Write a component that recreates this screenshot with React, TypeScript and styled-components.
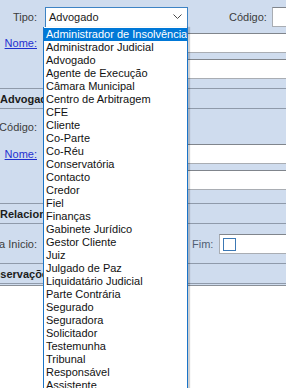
import React from "react";
import styled, { createGlobalStyle } from "styled-components";

const GlobalStyle = createGlobalStyle`
  html, body {
    margin: 0;
    padding: 0;
    background: #cfdcee;
    overflow: hidden;
  }
  body {
    font-family: "Liberation Sans", Arial, sans-serif;
    font-size: 11px;
    color: #3a3a3a;
  }
`;

const Page = styled.div`
  position: relative;
  width: 286px;
  height: 388px;
  overflow: hidden;
  background: #cfdcee;
`;

const Form = styled.div`
  display: flex;
  flex-direction: column;
`;

const Row = styled.div<{ $mt: number; $h?: number }>`
  display: flex;
  align-items: center;
  height: ${(p) => p.$h ?? 20}px;
  margin-top: ${(p) => p.$mt}px;
`;

const Label = styled.div<{ $w?: number }>`
  display: flex;
  justify-content: flex-end;
  width: ${(p) => p.$w ?? 37}px;
  flex-shrink: 0;
  white-space: nowrap;
  margin-right: 8px;
  color: #3c3c3c;
`;

const LinkLabel = styled.span`
  color: #1f2fd0;
  text-decoration: underline;
`;

const Input = styled.div<{ $w?: number }>`
  height: 20px;
  box-sizing: border-box;
  background: #fff;
  border: 1px solid #a9adb3;
  border-top-color: #80858c;
  ${(p) =>
    p.$w ? `width: ${p.$w}px; flex-shrink: 0;` : "flex: 1; margin-right: -4px;"}
`;

const Combo = styled.div`
  width: 143px;
  height: 21px;
  box-sizing: border-box;
  border: 1px solid #3d83c4;
  background: #fff;
  display: flex;
  align-items: center;
  padding: 0 5px 0 3px;
  color: #1a1a1a;
  flex-shrink: 0;
`;

const ComboText = styled.span`
  flex: 1;
`;

const SideLabel = styled.div`
  margin: 0 5px 0 41px;
  color: #3c3c3c;
  white-space: nowrap;
`;

const Header = styled.div<{ $mt: number }>`
  height: 21px;
  box-sizing: border-box;
  margin-top: ${(p) => p.$mt}px;
  border-top: 1px solid #8f9aaa;
  border-bottom: 1px solid #8f9aaa;
  display: flex;
  align-items: center;
  font-weight: bold;
  color: #1c1c1c;
  white-space: nowrap;
`;

const HeaderText = styled.span<{ $indent: number }>`
  margin-left: ${(p) => p.$indent}px;
`;

const FimLabel = styled.div`
  margin: 0 6px 0 47px;
  color: #4f5e74;
`;

const DateBox = styled.div`
  flex: 1;
  height: 20px;
  box-sizing: border-box;
  background: #fff;
  border: 1px solid #a9adb3;
  border-top-color: #80858c;
  display: flex;
  align-items: center;
  padding-left: 3px;
  margin-right: -4px;
`;

const Check = styled.div`
  width: 13px;
  height: 13px;
  box-sizing: border-box;
  border: 1px solid #3c78b4;
  background: #fff;
`;

const Memo = styled.div`
  margin-top: 1px;
  height: 120px;
  background: #fff;
  border-top: 1px solid #8a9098;
`;

const DropList = styled.ul`
  position: absolute;
  left: 43px;
  top: 27px;
  width: 145px;
  margin: 0;
  padding: 1px 0 0;
  list-style: none;
  box-sizing: border-box;
  background: #fff;
  border: 1px solid #1a74c8;
  border-top: none;
  box-shadow: 2px 0 1px rgba(0, 0, 0, 0.18);
  color: #111;
`;

const Option = styled.li<{ $selected?: boolean }>`
  height: 13px;
  line-height: 13px;
  padding-left: 2px;
  white-space: nowrap;
  overflow: hidden;
  background: ${(p) => (p.$selected ? "#0078d7" : "transparent")};
  color: ${(p) => (p.$selected ? "#fff" : "#111")};
`;

const options = [
  "Administrador de Insolvência",
  "Administrador Judicial",
  "Advogado",
  "Agente de Execução",
  "Câmara Municipal",
  "Centro de Arbitragem",
  "CFE",
  "Cliente",
  "Co-Parte",
  "Co-Réu",
  "Conservatória",
  "Contacto",
  "Credor",
  "Fiel",
  "Finanças",
  "Gabinete Jurídico",
  "Gestor Cliente",
  "Juiz",
  "Julgado de Paz",
  "Liquidatário Judicial",
  "Parte Contrária",
  "Segurado",
  "Seguradora",
  "Solicitador",
  "Testemunha",
  "Tribunal",
  "Responsável",
  "Assistente",
];

export default function App() {
  return (
    <Page>
      <GlobalStyle />
      <Form>
        <Row $mt={7}>
          <Label>Tipo:</Label>
          <Combo>
            <ComboText>Advogado</ComboText>
            <svg width="9" height="6" viewBox="0 0 9 6">
              <polyline points="0.5,0.5 4.5,4.5 8.5,0.5" fill="none" stroke="#4a4a4a" strokeWidth="1" />
            </svg>
          </Combo>
          <SideLabel>Código:</SideLabel>
          <Input />
        </Row>
        <Row $mt={6}>
          <Label>
            <LinkLabel>Nome:</LinkLabel>
          </Label>
          <Input />
        </Row>
        <Row $mt={6}>
          <Label />
          <Input />
        </Row>
        <Header $mt={9}>
          <HeaderText $indent={0}>Advogado</HeaderText>
        </Header>
        <Row $mt={8}>
          <Label>Código:</Label>
          <Input $w={80} />
        </Row>
        <Row $mt={7}>
          <Label>
            <LinkLabel>Nome:</LinkLabel>
          </Label>
          <Input />
        </Row>
        <Row $mt={6}>
          <Label />
          <Input />
        </Row>
        <Header $mt={13}>
          <HeaderText $indent={0}>Relacionamento</HeaderText>
        </Header>
        <Row $mt={10}>
          <Label>Data Inicio:</Label>
          <Input $w={100} />
          <FimLabel>Fim:</FimLabel>
          <DateBox>
            <Check />
          </DateBox>
        </Row>
        <Header $mt={9}>
          <HeaderText $indent={-15}>Observações</HeaderText>
        </Header>
        <Memo />
      </Form>
      <DropList>
        {options.map((o, i) => (
          <Option key={o} $selected={i === 0}>
            {o}
          </Option>
        ))}
      </DropList>
    </Page>
  );
}
